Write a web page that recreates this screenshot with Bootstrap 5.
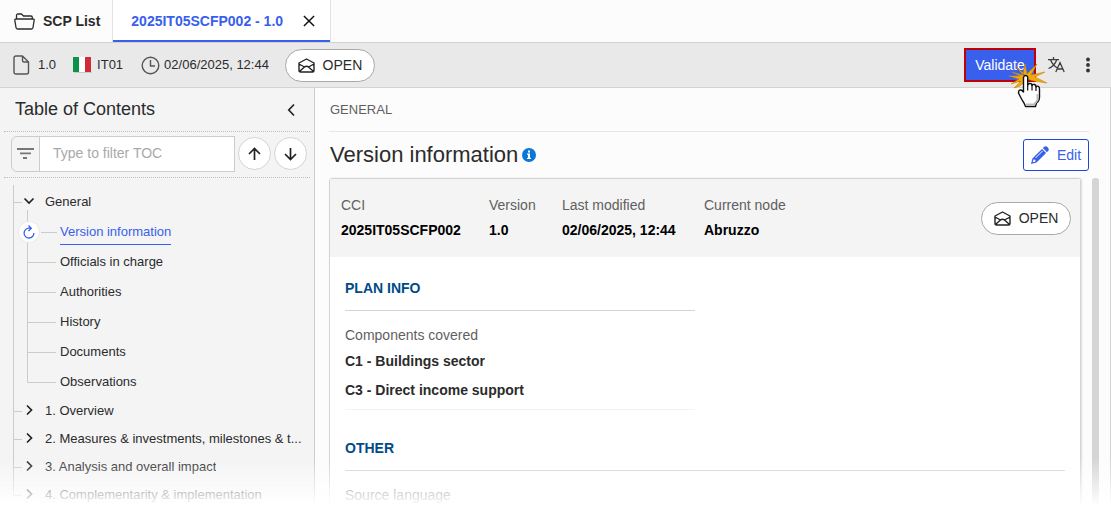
<!DOCTYPE html>
<html lang="en">
<head>
<meta charset="utf-8">
<meta name="viewport" content="width=device-width, initial-scale=1">
<title>SCP List - Version information</title>
<link href="https://cdn.jsdelivr.net/npm/bootstrap@5.3.0/dist/css/bootstrap.min.css" rel="stylesheet">
<style>
  :root { --line: #d3d3d3; --blue: #3860ed; --ink: #2b2b2b; --muted-ink: #5f5f5f; }
  body { font: 14px/20px "Liberation Sans", Arial, sans-serif; color: var(--ink); background: #fff; }
  a { color: inherit; text-decoration: none; }
  svg { flex: none; display: block; }
  button { color: inherit; }

  .tabs { background: #fcfcfc; border-bottom: 1px solid var(--line); height: 43px; }
  .tabs .nav-link { color: var(--ink); padding: 0 12px 0 14px; }
  .tabs .tab-open { background: #fff; border-left: 1px solid #e3e3e3; border-right: 1px solid #e3e3e3; box-shadow: inset 0 -2px var(--blue); padding: 0 15px 0 18px; }
  .tabs .tab-open .nav-link { color: var(--blue); padding: 0; }

  .toolbar { background: #e9e9e9; border-bottom: 1px solid var(--line); height: 45px; padding: 0 16px 0 13px; font-size: 13px; }
  .pill { background: #fff; border: 1px solid #a8a8a8; border-radius: 17px; height: 33px; width: 90px; font-size: 14px; }
  .validate { background: var(--blue); border: 2px solid #c00008; color: #fff; height: 34px; width: 72px; padding: 0; font-size: 14px; }
  .pointer { position: absolute; left: 44px; top: 15px; pointer-events: none; }

  .toc { width: 315px; flex: none; background: #f4f4f4; border-right: 1px solid #ccc; }
  .toc-head { height: 44px; margin: 0 4px; padding: 0 12px 0 11px; border-bottom: 1px dotted #bdbdbd; }
  .toc-head h2 { font-size: 18px; }
  .toc-filter { height: 46px; margin: 0 4px; padding: 0 0 2px 7px; border-bottom: 1px dotted #bdbdbd; }
  .toc-filter .input-group { width: 224px; height: 36px; margin-right: 3px; }
  .toc-filter .input-group-text { width: 29px; background: #f4f4f4; border-color: #ccc; }
  .toc-filter .form-control { font-size: 14px; padding: 0 13px; border-color: #ccc; border-radius: 0; }
  .toc-filter .form-control::placeholder { color: #a9a9a9; }
  .round { width: 33px; height: 33px; background: #fff; border: 1px solid var(--line); border-radius: 50%; margin-right: 3px; flex: none; }

  .tree { font-size: 13px; margin: 7px 11px 0 13px; padding-top: 3px; background: linear-gradient(#ccc, #ccc) 0 0 / 1px calc(100% - 14px) no-repeat; }
  .tree .node { height: 28px; }
  .tree .branch { margin: -6px 0 0 14px; padding-top: 7px; background: linear-gradient(#ccc, #ccc) 0 0 / 1px calc(100% - 15px) no-repeat; }
  .tree .branch .node { height: 30px; }
  .twig { border-top: 1px solid #ccc; width: 9px; flex: none; }
  .branch .twig { width: 29px; margin-right: 4px; }
  .branch .here .twig { width: 16px; margin: 0 3px 0 1px; }
  .here a { color: var(--blue); border-bottom: 1px solid var(--blue); line-height: 24px; margin-top: 1px; }
  .spin { width: 22px; height: 22px; margin-left: -9px; border-radius: 50%; background: #fff; border: 1px solid #eaeaea; flex: none; }
  .toggle { width: 12px; height: 18px; border: 0; padding: 0; margin: 0 10px 0 1px; background: none; flex: none; }

  .page-main { background: #fcfcfc; border-right: 1px solid var(--line); padding: 0 11px 0 14px; }
  .crumb { height: 44px; margin-right: 10px; padding-left: 1px; font-size: 13px; color: var(--muted-ink); border-bottom: 1px solid #e6e6e6; }
  .title-row { height: 46px; margin-right: 10px; padding-left: 1px; }
  .title-row h1 { font-size: 22px; }
  .edit { width: 66px; height: 32px; background: #fff; border: 1px solid #1d48d8; border-radius: 3px; color: var(--blue); padding: 0; }
  .panel { background: #fff; border: 1px solid var(--line); border-radius: 3px; box-shadow: 1px 0 2px #ddd; margin-right: 11px; }
  .panel-top { background: #f4f4f4; height: 78px; padding: 0 9px 0 11px; }
  .facts { display: grid; grid-template-columns: 124px 49px 118px auto; column-gap: 24px; line-height: 25px; white-space: nowrap; }
  .facts dt, .tag-line { font-weight: 400; color: var(--muted-ink); }
  .facts dd { color: #000; font-weight: 700; margin: 0; }
  .panel-body { padding: 21px 15px; }
  .panel-body .row { --bs-gutter-x: 20px; }
  .section-title { font-size: 14px; line-height: 20px; font-weight: 700; color: #004b87; padding-bottom: 12px; border-bottom: 1px solid var(--line); margin-bottom: 14px; }
  .covered { border-bottom: 1px solid #f3f3f3; margin-bottom: 28px; padding-bottom: 4px; }
  .covered .tag-line { margin-bottom: 2px; }
  .covered li { line-height: 29px; font-weight: 700; }
  .thumb { width: 7px; background: #d5d5d5; border-radius: 3px 3px 0 0; flex: none; }
  .fade-out { height: 53px; background: linear-gradient(#fff0, #fff 92%); pointer-events: none; }
</style>
</head>
<body>
<div class="d-flex flex-column vh-100 overflow-hidden">
  <nav class="tabs d-flex flex-shrink-0 fw-bold">
    <a class="nav-link d-flex align-items-center" href="#">
      <svg width="21" height="17" viewBox="0 0 21 17" fill="none" stroke="#2b2b2b" stroke-width="1.3" stroke-linejoin="round"><path d="M2.500 6V2.500Q2.500 1 4 1H7.500L9.500 3H17Q18.300 3 18.300 4.500V6M2 6H19Q20.300 6 20.200 7L19 14.500Q18.800 16 17.500 16H3.500Q2.200 16 2 14.500L.8 7.200Q.7 6 2 6Z"/></svg>
      <span class="ms-1 ps-1">SCP List</span>
    </a>
    <div class="tab-open d-flex align-items-center">
      <a class="nav-link" href="#">2025IT05SCFP002 - 1.0</a>
      <button class="btn p-0 border-0 ms-3 ps-1" type="button" aria-label="Close tab">
        <svg width="12" height="12" viewBox="0 0 13 13" stroke="#111" stroke-width="1.6"><path d="M1 1 12 12M12 1 1 12"/></svg>
      </button>
    </div>
  </nav>

  <div class="toolbar d-flex flex-shrink-0 align-items-center">
    <svg width="17" height="20" viewBox="0 0 17 20" fill="none" stroke="#555" stroke-width="1.4" stroke-linejoin="round"><path d="M3 1H9.500L15.500 7V17Q15.500 19 13.500 19H3Q1 19 1 17V3Q1 1 3 1ZM9.500 1V5.500Q9.500 7 11 7H15.500"/></svg>
    <span class="ms-1 ps-1">1.0</span>
    <svg class="ms-3 me-1" width="21" height="18" viewBox="0 0 21 18"><path fill="#c9c9c9" d="M2 16H20V17H2Z"/><path fill="#0a9246" d="M1 1H7V16H1Z"/><path fill="#fff" d="M7 1H13V16H7Z"/><path fill="#d02b38" d="M13 1H19V16H13Z"/></svg>
    <span>IT01</span>
    <svg class="ms-3 me-1" width="21" height="19" viewBox="0 0 21 19" fill="none" stroke="#555" stroke-width="1.4"><circle cx="11.500" cy="9.500" r="8.300"/><path d="M11.500 4V10H16"/></svg>
    <span>02/06/2025, 12:44</span>
    <button class="pill ms-3 d-flex align-items-center justify-content-center gap-2" type="button">
      <svg width="17" height="15" viewBox="0 0 17 15" fill="none" stroke="#222" stroke-width="1.4" stroke-linejoin="round"><path d="M1 5 8.500 1 16 5V12.500Q16 14 14.500 14H2.500Q1 14 1 12.500ZM1 6 6.500 9Q8.500 7.300 10.500 9L16 6M2 13 6.500 9M15 13 10.500 9"/></svg>
      OPEN
    </button>
    <div class="position-relative ms-auto">
      <button class="validate btn rounded-0" type="button">Validate</button>
      <svg class="pointer" width="40" height="46" viewBox="0 0 40 46">
        <path fill="#f0a90c" stroke="#c98708" stroke-width=".6" d="M19 14 8 3 15 12 17 1 19 11 29 1 23 12 37 9 27 14 39 20 26 18 19 16 12 23 6 25 13 18 3 21 11 16 1 13 12 13 4 9 14 12Z"/>
        <path fill="#fff" stroke="#111" stroke-width="1.400" stroke-linejoin="round" d="M15.500 28V14.500Q16 12.500 17.500 12.500 19.500 12.500 19.700 14.500V22Q20.500 20.500 22 20.500 24 20.500 24 22.500 25 21 26.500 21.500 28 22 28 24 29 22.500 30.500 23.500 31.500 24 31.500 26V34Q31.500 38 28.500 40L27.500 43.500H17.500L16 40Q14 37 12.500 34L10.500 30Q10.500 26.500 13 27 14.500 27.500 15.500 29Z"/>
        <path fill="none" stroke="#111" stroke-width="1.200" d="M19.700 21V27.500M24 22V27.500M28 23.500V28"/>
        <path fill="none" stroke="#bbb" stroke-width="2" d="M18 41.500H26L29.500 37V31"/>
      </svg>
    </div>
    <button class="btn border-0 p-0 ms-2 ps-1" type="button" aria-label="Language">
      <svg width="17" height="16" viewBox="0 0 17 16" fill="none" stroke="#3c3c3c" stroke-width="1.300"><path d="M0 2.700H11M5.500 0V2.700M2.500 2.700Q4.500 8 9.500 11M8.800 2.700Q6.500 9 .5 11.500M7.800 15 12 5.500 16.200 15M9.200 12H14.800"/></svg>
    </button>
    <button class="btn border-0 p-0 ms-3 me-1" type="button" aria-label="More">
      <svg width="10" height="16" viewBox="0 0 10 16" fill="#333"><circle cx="7" cy="2.500" r="1.900"/><circle cx="7" cy="8" r="1.900"/><circle cx="7" cy="13.500" r="1.900"/></svg>
    </button>
  </div>

  <div class="d-flex flex-grow-1 overflow-hidden">
    <aside class="toc">
      <div class="toc-head d-flex align-items-center justify-content-between">
        <h2 class="m-0 fw-normal">Table of Contents</h2>
        <button class="btn border-0 p-0" type="button" aria-label="Collapse">
          <svg width="15" height="14" viewBox="0 0 15 14" fill="none" stroke="#222" stroke-width="1.700"><path d="M11 1.500 5.800 7 11 12.500"/></svg>
        </button>
      </div>
      <div class="toc-filter d-flex align-items-center">
        <div class="input-group flex-nowrap flex-shrink-0">
          <label class="input-group-text p-0 justify-content-center" for="toc-text" aria-label="Filter">
            <svg width="17" height="11" viewBox="0 0 17 11" fill="#777"><path d="M0 0H17V2H0ZM3 4.500H14V6.300H3ZM6 9H10V11H6Z"/></svg>
          </label>
          <input class="form-control" id="toc-text" type="text" placeholder="Type to filter TOC">
        </div>
        <button class="round p-0 d-flex align-items-center justify-content-center" type="button" aria-label="Previous">
          <svg width="13" height="14" viewBox="0 0 13 14" fill="none" stroke="#222" stroke-width="1.700"><path d="M6.500 13V1.500M1 7 6.500 1.500 12 7"/></svg>
        </button>
        <button class="round p-0 d-flex align-items-center justify-content-center" type="button" aria-label="Next">
          <svg width="13" height="14" viewBox="0 0 13 14" fill="none" stroke="#222" stroke-width="1.700"><path d="M6.500 1V12.500M1 7 6.500 12.500 12 7"/></svg>
        </button>
      </div>
      <ul class="tree list-unstyled">
        <li>
          <div class="node d-flex align-items-center"><span class="twig"></span>
            <button class="toggle" type="button" aria-label="Collapse General"><svg width="12" height="14" viewBox="0 0 12 14" fill="none" stroke="#222" stroke-width="1.700"><path d="M1.500 3.500 6 8 10.500 3.500"/></svg></button>
            <a href="#">General</a></div>
          <ul class="branch list-unstyled">
            <li class="node here d-flex align-items-center">
              <span class="spin d-flex align-items-center justify-content-center"><svg width="12" height="14" viewBox="0 0 12 14" fill="none" stroke="#3860ed" stroke-width="1.300"><path d="M8 3.200H6A4.900 4.900 0 1 0 10.900 8M5.500 .5 8.300 3.200 5.500 6"/></svg></span>
              <span class="twig"></span><a href="#">Version information</a></li>
            <li class="node d-flex align-items-center"><span class="twig"></span><a href="#">Officials in charge</a></li>
            <li class="node d-flex align-items-center"><span class="twig"></span><a href="#">Authorities</a></li>
            <li class="node d-flex align-items-center"><span class="twig"></span><a href="#">History</a></li>
            <li class="node d-flex align-items-center"><span class="twig"></span><a href="#">Documents</a></li>
            <li class="node d-flex align-items-center"><span class="twig"></span><a href="#">Observations</a></li>
          </ul>
        </li>
        <li class="node d-flex align-items-center"><span class="twig"></span>
          <button class="toggle" type="button" aria-label="Expand 1"><svg width="12" height="14" viewBox="0 0 12 14" fill="none" stroke="#222" stroke-width="1.700"><path d="M4 1.500 8.500 6 4 10.500"/></svg></button>
          <a class="text-truncate" href="#">1. Overview</a></li>
        <li class="node d-flex align-items-center"><span class="twig"></span>
          <button class="toggle" type="button" aria-label="Expand 2"><svg width="12" height="14" viewBox="0 0 12 14" fill="none" stroke="#222" stroke-width="1.700"><path d="M4 1.500 8.500 6 4 10.500"/></svg></button>
          <a class="text-truncate" href="#">2. Measures &amp; investments, milestones &amp; t...</a></li>
        <li class="node d-flex align-items-center"><span class="twig"></span>
          <button class="toggle" type="button" aria-label="Expand 3"><svg width="12" height="14" viewBox="0 0 12 14" fill="none" stroke="#222" stroke-width="1.700"><path d="M4 1.500 8.500 6 4 10.500"/></svg></button>
          <a class="text-truncate" href="#">3. Analysis and overall impact</a></li>
        <li class="node d-flex align-items-center"><span class="twig"></span>
          <button class="toggle" type="button" aria-label="Expand 4"><svg width="12" height="14" viewBox="0 0 12 14" fill="none" stroke="#222" stroke-width="1.700"><path d="M4 1.500 8.500 6 4 10.500"/></svg></button>
          <a class="text-truncate" href="#">4. Complementarity &amp; implementation</a></li>
      </ul>
    </aside>

    <main class="page-main flex-grow-1 d-flex flex-column">
      <div class="crumb d-flex align-items-center flex-shrink-0">GENERAL</div>
      <div class="title-row d-flex align-items-center flex-shrink-0">
        <h1 class="m-0 fw-normal">Version information</h1>
        <svg class="ms-1" width="14" height="14" viewBox="0 0 14 14"><circle cx="7" cy="7" r="7" fill="#0b78d8"/><path fill="#fff" d="M6 2.500H8V4.500H6ZM5 5.500H8V9.800H9V11H5V9.800H6V6.700H5Z"/></svg>
        <button class="edit ms-auto d-flex align-items-center justify-content-center gap-2" type="button">
          <svg width="18" height="18" viewBox="0 0 18 18" fill="#3860ed"><path d="M12.700 1.200Q14.500-.8 16.700 1.300 18.800 3.500 16.900 5.300L15.900 6.200 11.800 2.100ZM11 2.900 15.100 7 5.500 16.500 0 18 1.400 12.500ZM2.500 13.500 1.700 16.300 4.500 15.500 4.300 13.700Z" fill-rule="evenodd"/><path stroke="#fff" stroke-width="1" d="M4.500 12 11.500 5"/></svg>
          Edit
        </button>
      </div>
      <div class="d-flex flex-grow-1">
        <section class="panel flex-grow-1">
          <div class="panel-top d-flex align-items-center justify-content-between">
            <dl class="facts m-0">
              <div><dt>CCI</dt><dd>2025IT05SCFP002</dd></div>
              <div><dt>Version</dt><dd>1.0</dd></div>
              <div><dt>Last modified</dt><dd>02/06/2025, 12:44</dd></div>
              <div><dt>Current node</dt><dd>Abruzzo</dd></div>
            </dl>
            <button class="pill d-flex align-items-center justify-content-center gap-2" type="button">
              <svg width="17" height="15" viewBox="0 0 17 15" fill="none" stroke="#222" stroke-width="1.400" stroke-linejoin="round"><path d="M1 5 8.500 1 16 5V12.500Q16 14 14.500 14H2.500Q1 14 1 12.500ZM1 6 6.500 9Q8.500 7.300 10.500 9L16 6M2 13 6.500 9M15 13 10.500 9"/></svg>
              OPEN
            </button>
          </div>
          <div class="panel-body">
            <div class="row">
              <div class="col-6">
                <h3 class="section-title">PLAN INFO</h3>
                <div class="covered">
                  <div class="tag-line">Components covered</div>
                  <ul class="list-unstyled m-0"><li>C1 - Buildings sector</li><li>C3 - Direct income support</li></ul>
                </div>
              </div>
              <div class="col-12">
                <h3 class="section-title">OTHER</h3>
                <div class="tag-line">Source language</div>
              </div>
            </div>
          </div>
        </section>
        <div class="thumb"></div>
      </div>
    </main>
  </div>
</div>
<div class="fade-out fixed-bottom"></div>
<script src="https://cdn.jsdelivr.net/npm/bootstrap@5.3.0/dist/js/bootstrap.bundle.min.js"></script>
</body>
</html>
